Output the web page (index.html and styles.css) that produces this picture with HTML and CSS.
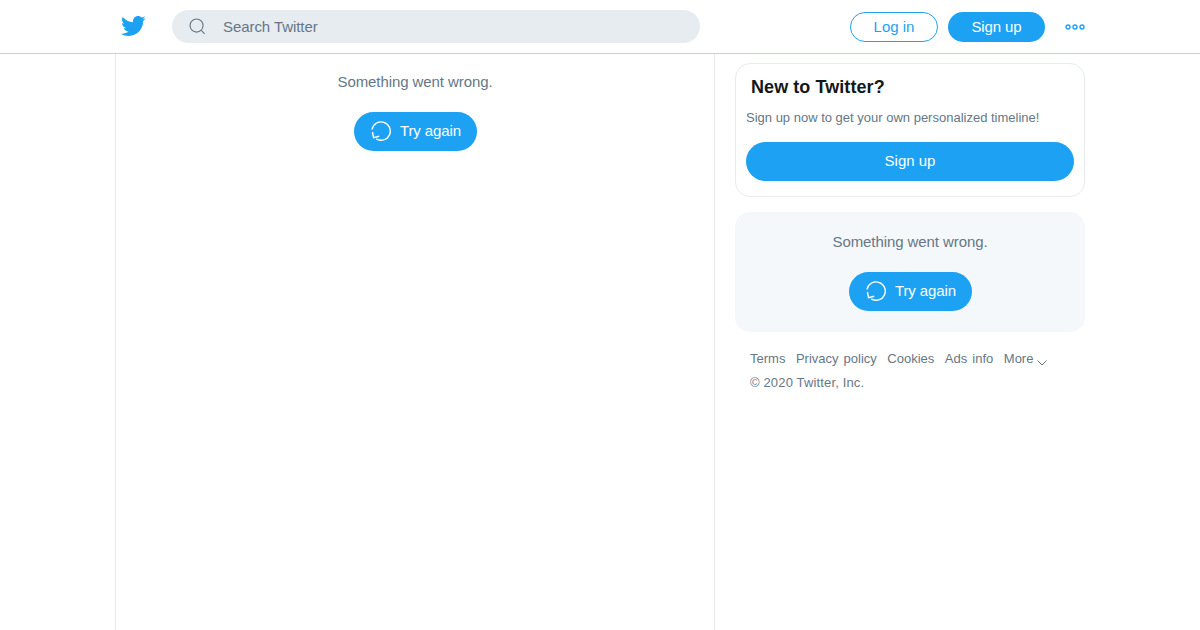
FILE: index.html
```html
<!DOCTYPE html>
<html lang="en">
<head>
    <meta charset="UTF-8">
    <title>Twitter</title>
    <link rel="stylesheet" href="styles.css">
</head>
<body>
    <header class="topbar">
        <div class="topbar-inner">
            <svg class="logo" viewBox="0 0 24 24"><path d="M23.643 4.937c-.835.37-1.732.62-2.676.733.962-.576 1.7-1.49 2.048-2.578-.9.534-1.897.922-2.958 1.13-.85-.904-2.06-1.47-3.4-1.47-2.572 0-4.658 2.086-4.658 4.66 0 .364.042.718.12 1.06-3.873-.195-7.304-2.05-9.602-4.868-.4.69-.63 1.49-.63 2.342 0 1.616.823 3.043 2.072 3.878-.764-.025-1.482-.234-2.11-.583v.06c0 2.257 1.605 4.14 3.737 4.568-.392.106-.803.162-1.227.162-.3 0-.593-.028-.877-.082.593 1.85 2.313 3.198 4.352 3.234-1.595 1.25-3.604 1.995-5.786 1.995-.376 0-.747-.022-1.112-.065 2.062 1.323 4.51 2.093 7.14 2.093 8.57 0 13.255-7.098 13.255-13.254 0-.2-.005-.402-.014-.602.91-.658 1.7-1.477 2.323-2.41z"/></svg>
            <div class="search">
                <svg class="search-icon" viewBox="0 0 18 18"><circle cx="8" cy="8" r="6.9"/><path d="M13 13l3.6 3.8"/></svg>
                <span>Search Twitter</span>
            </div>
            <a class="btn btn-outline">Log in</a>
            <a class="btn btn-solid btn-signup">Sign up</a>
            <svg class="more-dots" viewBox="0 0 20 6"><circle cx="3" cy="3" r="2"/><circle cx="10" cy="3" r="2"/><circle cx="17" cy="3" r="2"/></svg>
        </div>
    </header>

    <div class="page">
        <main class="timeline">
            <p class="error-text">Something went wrong.</p>
            <a class="btn btn-solid btn-retry">
                <svg class="retry-icon" viewBox="0 0 20 20"><path d="M1 8.5A9.2 9.2 0 1 1 5.2 17.9"/><path d="M1.4 11l1.2 5.6 5.6-1.4"/></svg>
                Try again
            </a>
        </main>

        <aside class="sidebar">
            <section class="card signup-card">
                <h2>New to Twitter?</h2>
                <p>Sign up now to get your own personalized timeline!</p>
                <a class="btn btn-solid btn-wide">Sign up</a>
            </section>

            <section class="card trends-card">
                <p class="error-text">Something went wrong.</p>
                <a class="btn btn-solid btn-retry">
                    <svg class="retry-icon" viewBox="0 0 20 20"><path d="M1 8.5A9.2 9.2 0 1 1 5.2 17.9"/><path d="M1.4 11l1.2 5.6 5.6-1.4"/></svg>
                    Try again
                </a>
            </section>

            <footer class="foot">
                <div class="foot-links">
                    <a>Terms</a>
                    <a>Privacy policy</a>
                    <a>Cookies</a>
                    <a>Ads info</a>
                    <a>More<svg class="chevron" viewBox="0 0 10 6"><path d="M.5.5l4.5 4.5L9.5.5"/></svg></a>
                </div>
                <div class="copyright">© 2020 Twitter, Inc.</div>
            </footer>
        </aside>
    </div>
</body>
</html>
```

FILE: styles.css
```css
body {
    margin: 0;
    background-color: #fff;
    font-family: "Liberation Sans", Arial, sans-serif;
    color: #657786;
    height: 630px;
    overflow: hidden;
}

p {
    margin: 0;
}

.topbar {
    height: 53px;
    border-bottom: 1px solid #ccd0d4;
}

.topbar-inner {
    width: 970px;
    height: 53px;
    margin-left: 120px;
    display: flex;
    align-items: center;
}

.logo {
    width: 26px;
    height: 26px;
    fill: #1da1f2;
    margin-top: -1px;
}

.search {
    width: 528px;
    height: 33px;
    margin-left: 26px;
    margin-top: -1px;
    border-radius: 17px;
    background-color: #e6ecf0;
    display: flex;
    align-items: center;
    font-size: 15px;
    letter-spacing: -0.07px;
}

.search-icon {
    width: 17px;
    height: 17px;
    margin: 0 17px 0 17px;
    fill: none;
    stroke: #657786;
    stroke-width: 1.2;
}

.btn {
    display: flex;
    align-items: center;
    justify-content: center;
    box-sizing: border-box;
    padding-bottom: 2px;
    border-radius: 20px;
    font-size: 15px;
}

.btn-solid {
    background-color: #1da1f2;
    color: #fff;
}

.btn-outline {
    width: 88px;
    height: 30px;
    margin-left: 150px;
    margin-top: 1px;
    border: 1px solid #1da1f2;
    color: #1da1f2;
}

.btn-signup {
    width: 97px;
    height: 30px;
    margin-left: 10px;
    margin-top: 1px;
    letter-spacing: -0.1px;
}

.more-dots {
    width: 20px;
    height: 6px;
    margin-left: 20px;
    fill: none;
    stroke: #1da1f2;
    stroke-width: 1.4;
}

.page {
    width: 970px;
    margin-left: 115px;
    display: flex;
    height: 576px;
}

.timeline {
    width: 598px;
    border-left: 1px solid #e6ecf0;
    border-right: 1px solid #e6ecf0;
    display: flex;
    flex-direction: column;
    align-items: center;
}

.error-text {
    font-size: 15px;
    line-height: 20px;
    letter-spacing: -0.08px;
}

.timeline .error-text {
    margin-top: 18px;
}

.btn-retry {
    width: 123px;
    height: 39px;
    margin-top: 20px;
    padding-left: 2px;
    gap: 9px;
    letter-spacing: -0.1px;
}

.retry-icon {
    width: 20px;
    height: 20px;
    fill: none;
    stroke: #fff;
    stroke-width: 1.4;
}

.sidebar {
    width: 350px;
    margin-left: 20px;
    padding-top: 9px;
}

.card {
    box-sizing: border-box;
    width: 350px;
    border-radius: 15px;
}

.signup-card {
    height: 134px;
    border: 1px solid #e6ecf0;
    padding: 0 10px;
}

.signup-card h2 {
    margin: 12px 0 0 5px;
    font-size: 18px;
    line-height: 22px;
    font-weight: bold;
    letter-spacing: 0.07px;
    color: #14171a;
}

.signup-card p {
    margin-top: 11px;
    font-size: 13px;
    line-height: 18px;
}

.btn-wide {
    width: 328px;
    height: 39px;
    margin-top: 15px;
}

.trends-card {
    height: 120px;
    margin-top: 15px;
    background-color: #f5f8fa;
    display: flex;
    flex-direction: column;
    align-items: center;
    padding-top: 20px;
}

.foot {
    margin-top: 18px;
    padding-left: 15px;
    font-size: 13px;
    line-height: 18px;
}

.foot-links {
    display: flex;
    gap: 10.5px;
    word-spacing: 1.5px;
}

.chevron {
    width: 10px;
    height: 6px;
    margin-left: 4px;
    vertical-align: -3px;
    fill: none;
    stroke: #657786;
    stroke-width: 1;
}

.copyright {
    margin-top: 6px;
    letter-spacing: 0.15px;
}
```
